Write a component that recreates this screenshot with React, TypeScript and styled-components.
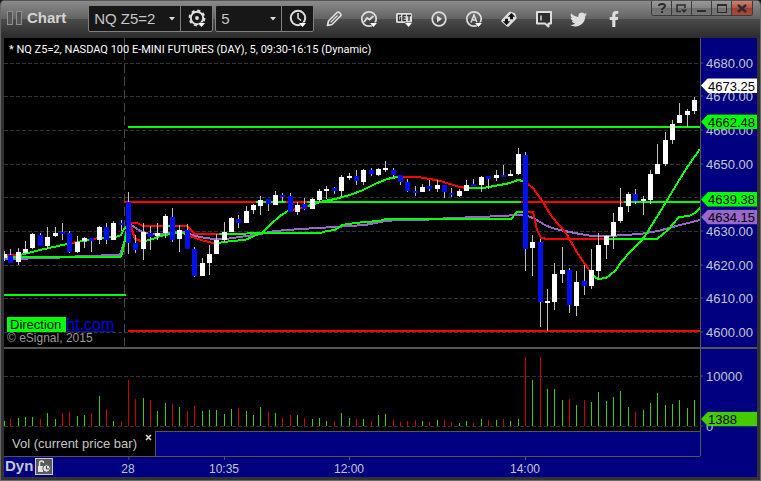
import React from "react";
import styled, { createGlobalStyle } from "styled-components";
import { FaTwitter, FaFacebookF } from "react-icons/fa";

const GlobalStyle = createGlobalStyle`
  *, *::before, *::after { box-sizing: border-box; }
  html, body { margin: 0; background: #1b1b1b; }
  body, button, select { font-family: "Liberation Sans", Arial, sans-serif; }
`;

const LINE = "#555555";
const NAVY = "#000080";
const LABEL = "#c3c7cf";

/* ---------- data ---------- */

/* w/b = up/down body, then high, body top, body bottom, low */
type Bar = ["w" | "b", number, number, number, number];

const bars: Bar[] = [
  ["w", 251, 254, 258, 261], ["b", 249, 255, 263, 263], ["w", 248, 252, 262, 265],
  ["w", 241, 249, 253, 253], ["w", 233, 234, 248, 249], ["b", 233, 235, 246, 246],
  ["w", 227, 237, 246, 249], ["w", 227, 233, 236, 237], ["b", 223, 232, 234, 240],
  ["b", 231, 233, 252, 253], ["w", 236, 242, 252, 253], ["w", 237, 238, 241, 248],
  ["b", 238, 238, 241, 252], ["w", 226, 227, 240, 244], ["b", 223, 227, 240, 244],
  ["w", 221, 223, 240, 240], ["b", 220, 223, 225, 231], ["b", 192, 202, 243, 254],
  ["b", 235, 243, 250, 253], ["w", 223, 232, 249, 260], ["b", 226, 233, 237, 250],
  ["w", 223, 233, 236, 240], ["w", 214, 216, 233, 238], ["b", 208, 217, 240, 242],
  ["w", 225, 230, 239, 252], ["b", 224, 230, 249, 249], ["b", 247, 249, 276, 277],
  ["w", 258, 263, 276, 276], ["w", 245, 254, 263, 275], ["w", 234, 240, 254, 254],
  ["w", 222, 232, 240, 242], ["w", 217, 218, 232, 232], ["b", 215, 219, 223, 228],
  ["w", 206, 211, 223, 223], ["w", 204, 205, 210, 214], ["w", 196, 200, 206, 215],
  ["b", 199, 199, 204, 211], ["w", 191, 195, 205, 205], ["b", 193, 195, 197, 202],
  ["b", 193, 196, 212, 212], ["w", 202, 205, 212, 215], ["b", 198, 204, 209, 210],
  ["w", 198, 199, 209, 209], ["w", 189, 191, 200, 202], ["w", 186, 189, 191, 199],
  ["b", 187, 188, 191, 194], ["w", 175, 177, 191, 196], ["w", 173, 176, 178, 180],
  ["b", 170, 176, 181, 185], ["w", 169, 170, 182, 185], ["b", 168, 170, 174, 176],
  ["w", 168, 169, 175, 176], ["w", 161, 168, 170, 172], ["b", 168, 170, 175, 178],
  ["b", 175, 175, 182, 185], ["b", 179, 182, 191, 192], ["b", 186, 191, 193, 196],
  ["w", 184, 187, 192, 192], ["b", 180, 186, 189, 191], ["w", 180, 185, 189, 192],
  ["b", 185, 185, 192, 198], ["b", 188, 193, 195, 197], ["w", 189, 191, 196, 197],
  ["w", 180, 185, 191, 191], ["b", 179, 184, 186, 186], ["w", 176, 177, 185, 192],
  ["b", 176, 176, 179, 189], ["w", 170, 175, 178, 181], ["b", 165, 175, 177, 177],
  ["w", 170, 174, 176, 176], ["w", 148, 154, 174, 175], ["b", 152, 155, 249, 271],
  ["w", 235, 242, 248, 276], ["b", 239, 242, 302, 327], ["w", 289, 301, 303, 331],
  ["w", 263, 274, 302, 310], ["w", 247, 270, 274, 283], ["b", 268, 270, 305, 313],
  ["w", 271, 282, 306, 316], ["b", 265, 281, 286, 295], ["w", 249, 270, 286, 289],
  ["w", 233, 245, 271, 280], ["w", 235, 236, 245, 259], ["w", 213, 222, 236, 249],
  ["w", 188, 207, 221, 223], ["w", 192, 194, 206, 212], ["b", 189, 194, 201, 204],
  ["w", 196, 199, 201, 215], ["w", 170, 174, 200, 204], ["w", 144, 164, 174, 174],
  ["w", 132, 140, 164, 166], ["w", 120, 124, 140, 144], ["w", 103, 115, 123, 123],
  ["w", 109, 111, 115, 127], ["w", 97, 100, 111, 114],
];

/* g/r = up/down volume followed by the column height */
const volumes =
  "g5 r7 g8 g9 g9 r7 g13 g7 r13 r14 g10 g11 r13 g30 r17 g5 r5 r46 r27 g28 r26 g15 g23 r22 g19 r15 r20 g15 g16 g16 g12 g17 r18 g15 g11 g19 r14 g13 r8 r11 g11 r8 g7 g8 g5 r5 g13 g8 r7 g7 r5 g11 g12 r6 r4 r5 r6 g5 r4 g6 r6 r4 g3 g5 r3 g7 r6 g6 r7 g5 g7 r69 g46 r69 g37 g37 g26 r27 g21 r26 g24 g34 g25 g29 g35 g19 r14 g16 g23 g33 g21 g22 g26 g18 g26".split(" ");

const GREEN = "#00ff00";
const RED = "#ff0000";
const PURPLE = "#9966cc";

const studies: Array<[string, string]> = [
  [PURPLE, "4,259 53,258 82,256 120,255 125,240 128,223 133,226 140,231 150,234 160,234 175,232 185,232 192,235 200,237 213,239 225,239 240,237 260,234 275,231 300,229 335,227 365,225 385,221 400,220 422,220 450,218 480,217 500,216 518,215 528,216 535,219 545,225 552,228 560,230 580,234 592,236 610,236 625,235 640,234 658,231 680,225 700,220"],
  [GREEN, "4,295 126,295"],
  [GREEN, "128,127 700,127"],
  [RED, "128,331 700,331"],
  [RED, "124,202 256,202"],
  [GREEN, "256,202 286,202"],
  [RED, "286,202 307,202"],
  [GREEN, "307,202 521,202"],
  [RED, "521,202 624,202"],
  [GREEN, "624,202 700,202"],
  [RED, "4,255 18,255"],
  [GREEN, "4,257 120,257 122,254 126,234 128,226"],
  [RED, "130,223 137,223 143,226 167,226"],
  [GREEN, "167,226 174,226"],
  [RED, "174,226 187,226 195,234 219,234"],
  [GREEN, "219,234 275,233 320,233 327,231 335,230 342,225 355,223 365,222 380,221 385,219 511,219 517,212 523,212"],
  [RED, "523,212 533,212 537,230 541,238 548,239 608,239"],
  [GREEN, "608,239 657,239 668,230 679,217 689,216 695,213 700,208"],
  [GREEN, "20,255 40,250 67,244"],
  [RED, "67,244 77,242"],
  [GREEN, "77,242 90,240"],
  [RED, "90,240 98,238"],
  [GREEN, "98,238 116,237 121,235 124,229 128,225"],
  [RED, "130,224 135,239 141,241 145,241"],
  [GREEN, "145,241 153,239 160,236 170,234 180,233 188,234"],
  [RED, "188,235 195,238 205,241 213,243 217,243"],
  [GREEN, "217,243 232,241 245,240 254,236 262,233 270,225 280,216 288,211 292,210"],
  [RED, "292,210 308,206"],
  [GREEN, "308,206 320,202 335,199 350,195 363,190 375,184 387,179 397,177 402,177"],
  [RED, "402,177 418,177 430,179 440,181 450,184 460,187 467,188"],
  [GREEN, "467,188 483,188 500,185 510,183 518,180 523,181"],
  [RED, "523,181 528,184 533,188 541,199 552,217 566,233 578,254 592,274"],
  [GREEN, "592,275 598,279 606,278 615,271 622,261 631,251 640,242 645,236 660,212 678,182 688,166 700,149"],
];

const barX = (i: number) => Math.max(4, Math.round(128 + 7.35 * (i - 17)));

const PLOT = { left: 4, width: 696, top: 38, height: 309 };
const priceY = (p: number) => 332 - (p - 4600) * 3.365;
const pricePct = (p: number) => `${((priceY(p) - PLOT.top) / PLOT.height) * 100}%`;
const volumeY = (v: number) => 426 - v * 0.005;
const volumePct = (v: number) => `${((volumeY(v) - 349) / 82) * 100}%`;
const timePct = (i: number) => `${((barX(i) - PLOT.left) / PLOT.width) * 100}%`;

const priceLevels = [4680, 4670, 4660, 4650, 4640, 4630, 4620, 4610, 4600];
const priceFlags = [
  { price: 4634.15, bg: PURPLE },
  { price: 4639.38, bg: GREEN },
  { price: 4662.48, bg: GREEN },
  { price: 4673.25, bg: "#ffffff" },
];
const times = [
  { bar: 17, text: "28" },
  { bar: 30, text: "10:35" },
  { bar: 47, text: "12:00" },
  { bar: 71, text: "14:00" },
];

/* ---------- window frame and title bar ---------- */

const Window = styled.div`
  display: flex;
  flex-direction: column;
  min-height: 100vh;
  border: 1px solid #666;
  border-top: 0;
  border-radius: 5px 5px 0 0;
  background: #333;
  overflow: hidden;
`;

const TitleBar = styled.header`
  display: flex;
  align-items: flex-start;
  height: 38px;
  padding: 0 7px 0 6px;
  border-top: 1px solid #555;
  background: linear-gradient(#8b8b8b 0, #626262 18px, #4b4b4b 18px, #2c2c2c 37px);
`;

const Grip = styled.span`
  display: flex;
  gap: 3px;
  margin: 10px 5px 0 0;
  &::before, &::after {
    content: "";
    width: 6px;
    height: 14px;
    border: 1px solid #8f8f8f;
    background: #555;
  }
`;

const AppName = styled.h1`
  margin: 8px 22px 0 0;
  font-size: 15px;
  line-height: 18px;
  font-weight: bold;
  color: #d4d4d4;
`;

const Combo = styled.div`
  display: flex;
  height: 27px;
  margin: 4px 2px 0 0;
  border: 1px solid #808080;
  border-radius: 2px;
  background: #171717;
`;

const SelectWrap = styled.label<{ $width: number }>`
  position: relative;
  width: ${(p) => p.$width}px;
  border-right: 1px solid #808080;
`;

const Select = styled.select`
  appearance: none;
  width: 100%;
  height: 25px;
  padding: 0 0 0 5px;
  border: 0;
  background: transparent;
  color: #c6c6c6;
  font-size: 15px;
  line-height: 25px;
`;

const Caret = styled.svg`
  position: absolute;
  right: 5px;
  top: 11px;
  pointer-events: none;
`;

const ComboButton = styled.button`
  display: grid;
  place-items: center;
  width: 31px;
  padding: 0;
  border: 0;
  background: transparent;
`;

const Tools = styled.nav`
  display: flex;
  flex: 1;
  margin-top: 7px;
`;

const ToolButton = styled.button`
  display: grid;
  place-items: center;
  width: 35px;
  height: 22px;
  padding: 0;
  border: 0;
  background: transparent;
  color: #dedede;
`;

const WindowButtons = styled.div`
  display: flex;
  border: 1px solid #3a3a3a;
  border-top: 0;
  border-radius: 0 0 3px 3px;
  overflow: hidden;
`;

const WindowButton = styled.button<{ $close?: boolean }>`
  display: grid;
  place-items: center;
  width: 20px;
  height: 14px;
  padding: 0;
  border: 0;
  border-right: ${(p) => (p.$close ? "0" : "1px solid #3a3a3a")};
  background: ${(p) =>
    p.$close
      ? "linear-gradient(#c98476, #b55340 50%, #9c4030 50%, #a84a38)"
      : "linear-gradient(#9a9a9a, #858585 50%, #6f6f6f 50%, #767676)"};
  color: #2b2b2b;
`;

/* ---------- chart body ---------- */

const ChartGrid = styled.main`
  flex: 1;
  display: grid;
  grid-template-columns: minmax(0, 1fr) 57px;
  grid-template-rows: minmax(309px, 1fr) 2px 82px 25px 21px;
  margin: 0 3px 3px;
  background: ${NAVY};
`;

const Pane = styled.section`
  position: relative;
  min-height: 0;
  background: #000;
`;

const Plot = styled.svg`
  position: absolute;
  inset: 0;
  display: block;
  width: 100%;
  height: 100%;
`;

const PaneTitle = styled.h2`
  position: absolute;
  left: 5px;
  top: 5px;
  margin: 0;
  font-family: Roboto, "Liberation Sans", sans-serif;
  font-size: 11px;
  line-height: 13px;
  font-weight: normal;
  color: #fff;
  white-space: nowrap;
`;

const Credits = styled.div`
  position: absolute;
  left: 3px;
  bottom: 3px;
  color: #9a9a9a;
  font-size: 12px;
  line-height: 12px;
`;

const CreditRow = styled.div`
  display: flex;
  align-items: center;
`;

const DirectionTag = styled.span`
  padding: 0 5px 0 3px;
  background: ${GREEN};
  color: #000;
  font-size: 13px;
  line-height: 15px;
`;

const SiteLink = styled.a`
  color: #0000e0;
  font-size: 16px;
  line-height: 15px;
`;

const Divider = styled.div`
  grid-column: 1 / -1;
  background: ${LINE};
`;

const Scale = styled.div`
  position: relative;
  border-left: 1px solid ${LINE};
  color: ${LABEL};
  font-size: 13px;
  line-height: 15px;
`;

const ScaleLabel = styled.span`
  position: absolute;
  left: 5px;
  transform: translateY(-50%);
  &::before {
    content: "";
    position: absolute;
    left: -5px;
    top: 7px;
    width: 2px;
    height: 1px;
    background: ${LINE};
  }
`;

const Flag = styled.output<{ $bg: string }>`
  position: absolute;
  left: 0;
  right: 0;
  height: 15px;
  padding-left: 7px;
  transform: translateY(-50%);
  background: ${(p) => p.$bg};
  color: #000;
  clip-path: polygon(0 50%, 7px 0, 100% 0, 100% 100%, 7px 100%);
`;

const LegendRow = styled.div`
  display: flex;
`;

const LegendTab = styled.div`
  display: flex;
  align-items: flex-start;
  gap: 8px;
  padding: 5px 3px 0 8px;
  background: #000;
  color: #c6c6c6;
  font-size: 13px;
  line-height: 16px;
  white-space: nowrap;
`;

const CloseTab = styled.button`
  display: grid;
  place-items: center;
  width: 7px;
  height: 7px;
  margin-top: -2px;
  padding: 0;
  border: 0;
  background: transparent;
`;

const LegendSpace = styled.div`
  flex: 1;
  border-top: 1px solid ${LINE};
  border-left: 1px solid ${LINE};
`;

const LegendEdge = styled.div`
  border-left: 1px solid ${LINE};
`;

const TimeRow = styled.div`
  position: relative;
  display: flex;
  align-items: flex-start;
  border-top: 1px solid ${LINE};
  color: ${LABEL};
`;

const Mode = styled.strong`
  padding-left: 1px;
  font-size: 15px;
  line-height: 18px;
`;

const LockButton = styled.button`
  display: grid;
  place-items: center;
  width: 18px;
  height: 17px;
  margin: 1px 0 0 2px;
  padding: 0;
  border: 1px solid #ccc;
  background: #5a5a5a;
`;

const TimeLabel = styled.time`
  position: absolute;
  top: 5px;
  transform: translateX(-50%);
  font-size: 12px;
  line-height: 15px;
  &::before {
    content: "";
    position: absolute;
    left: 50%;
    top: -5px;
    width: 1px;
    height: 3px;
    background: ${LINE};
  }
`;

/* ---------- icons ---------- */

const INK = "#dedede";

function Icon({ children }: { children: React.ReactNode }) {
  return (
    <svg width="20" height="20" viewBox="0 0 20 20" fill="none" stroke={INK} strokeWidth="2" aria-hidden="true">
      {children}
    </svg>
  );
}

const MenuMark = () => <path d="M11 14h7l-3.500 4z" fill="#fff" stroke="#2a2a2a" strokeWidth="1" paintOrder="stroke" />;

const GearIcon = () => (
  <Icon>
    <circle cx="10" cy="9" r="6.200" strokeWidth="2" />
    <circle cx="10" cy="9" r="7.500" strokeWidth="1.800" strokeDasharray="3.200 2.690" />
    <circle cx="10" cy="9" r="1.900" fill={INK} stroke="none" />
    <MenuMark />
  </Icon>
);
const ClockIcon = () => (
  <Icon>
    <circle cx="10" cy="9" r="7.200" />
    <path d="M10 4v5l3 2.500" strokeWidth="1.600" />
    <MenuMark />
  </Icon>
);
const PencilIcon = () => (
  <Icon>
    <path d="M3.500 16.500l1-4.500L13 3.500q1.500-1 3 .5t.5 3L8 15.500z" strokeWidth="1.700" strokeLinejoin="round" />
    <path d="M6.500 13.500l7-7" strokeWidth="1.200" />
    <path d="M3 17l.7-3 2.300 2.300z" fill={INK} stroke="none" />
  </Icon>
);
const WaveIcon = () => (
  <Icon>
    <circle cx="10" cy="10" r="7.200" strokeWidth="1.800" />
    <path d="M5 13l3-4 2.500 1.500L14.500 7" strokeWidth="1.900" />
    <MenuMark />
  </Icon>
);
const GetIcon = () => (
  <Icon>
    <rect x="2" y="4" width="16" height="10" rx="1.500" fill={INK} stroke="none" />
    <path d="M7 6.500H4.500v5h2V9H6M12 6.500H9v5h3M9 9h2.500M13 6.500h4M15 6v6" stroke="#333" strokeWidth="1.300" />
    <MenuMark />
  </Icon>
);
const PlayIcon = () => (
  <Icon>
    <circle cx="10" cy="10" r="6.800" strokeWidth="1.700" />
    <path d="M8 6.500l5 3.500-5 3.500z" fill={INK} stroke="none" />
  </Icon>
);
const AutoIcon = () => (
  <Icon>
    <circle cx="10" cy="10" r="7.200" strokeWidth="1.700" />
    <path d="M7 13.500l3-7.500 3 7.500M8 11h4" strokeWidth="1.500" />
    <MenuMark />
  </Icon>
);
const LinkIcon = () => (
  <Icon>
    <path d="M9.500 3.500q1-1 2-.7l4 1.200q.8.300 1 1.200l1 3.300q.2 1-.6 1.800L10 17.200q-1.200 1-2.300 0L2.800 13q-1.200-1.200 0-2.300z" fill={INK} stroke="none" />
    <path d="M12.500 4l3.700 3.700h-2.200v2.600h-3V7.700H8.800zM7.500 16l-3.700-3.700H6V9.700h3v2.600h2.200z" fill="#111" stroke="none" />
  </Icon>
);
const NoteIcon = () => (
  <Icon>
    <path d="M3 3h14v11.500h-2.500V17.500L11 14.500H3z" stroke={INK} strokeWidth="2" fill="#2e2e2e" strokeLinejoin="round" />
    <path d="M7 6.500v5" stroke="#fff" strokeWidth="1.200" />
  </Icon>
);

function SelectCaret() {
  return (
    <Caret width="6" height="4" viewBox="0 0 6 4" aria-hidden="true">
      <path d="M0 0h6L3 3.500z" fill="#ddd" />
    </Caret>
  );
}

const tools = [
  ["Draw", <PencilIcon />],
  ["Studies", <WaveIcon />],
  ["GET studies", <GetIcon />],
  ["Play", <PlayIcon />],
  ["Automation", <AutoIcon />],
  ["Link", <LinkIcon />],
  ["Note", <NoteIcon />],
  ["Twitter", <FaTwitter size={17} />],
  ["Facebook", <FaFacebookF size={16} />],
] as Array<[string, React.ReactElement]>;

/* ---------- plots ---------- */

function PricePlot() {
  return (
    <Plot viewBox="4 38 696 309" preserveAspectRatio="none" shapeRendering="crispEdges" role="img" aria-label="Price chart">
      <g stroke="#333333" strokeWidth="1" strokeDasharray="4 2">
        {priceLevels.map((p) => (
          <line key={p} x1="4" x2="700" y1={Math.round(priceY(p)) + 0.5} y2={Math.round(priceY(p)) + 0.5} />
        ))}
        <line x1="124.500" x2="124.500" y1="38" y2="347" stroke="#4a4a4a" strokeDasharray="9 4" />
      </g>
      <g fill="none" strokeWidth="2" strokeLinejoin="round">
        {studies.map(([color, points], i) => (
          <polyline key={i} points={points} stroke={color} />
        ))}
      </g>
      {bars.map(([kind, high, top, bottom, low], i) => (
        <g key={i}>
          <rect x={barX(i)} y={high} width="1" height={low - high} fill="#c0c0c0" />
          <rect x={barX(i) - 2} y={top} width="5" height={bottom - top} fill={kind === "w" ? "#ffffff" : "#0010f0"} />
        </g>
      ))}
    </Plot>
  );
}

function VolumePlot() {
  return (
    <Plot viewBox="4 349 696 82" preserveAspectRatio="none" shapeRendering="crispEdges" role="img" aria-label="Volume chart">
      <g stroke="#333333" strokeWidth="1" strokeDasharray="4 2">
        <line x1="4" x2="700" y1="376.500" y2="376.500" />
        <line x1="4" x2="700" y1="426.500" y2="426.500" />
      </g>
      {volumes.map((v, i) => {
        const h = Number(v.slice(1));
        return <rect key={i} x={barX(i)} y={426 - h} width="1" height={h} fill={v[0] === "g" ? "#44cc00" : "#cc0000"} />;
      })}
    </Plot>
  );
}

export default function App() {
  return (
    <>
      <GlobalStyle />
      <Window>
        <TitleBar>
          <Grip />
          <AppName>Chart</AppName>
          <Combo>
            <SelectWrap $width={92}>
              <Select aria-label="Symbol" defaultValue="NQ Z5=2">
                <option>NQ Z5=2</option>
              </Select>
              <SelectCaret />
            </SelectWrap>
            <ComboButton aria-label="Symbol settings"><GearIcon /></ComboButton>
          </Combo>
          <Combo>
            <SelectWrap $width={66}>
              <Select aria-label="Interval" defaultValue="5">
                <option>5</option>
              </Select>
              <SelectCaret />
            </SelectWrap>
            <ComboButton aria-label="Time template"><ClockIcon /></ComboButton>
          </Combo>
          <Tools aria-label="Chart tools">
            {tools.map(([name, icon]) => (
              <ToolButton key={name} aria-label={name}>{icon}</ToolButton>
            ))}
          </Tools>
          <WindowButtons>
            <WindowButton aria-label="Help">
              <svg width="8" height="10" viewBox="0 0 8 10" fill="none" stroke="currentColor" strokeWidth="2">
                <path d="M1 3q0-2 3-2t3 2q0 1-1.500 2T4 7M4 8v2" />
              </svg>
            </WindowButton>
            <WindowButton aria-label="Window menu">
              <svg width="11" height="9" viewBox="0 0 11 9" fill="none" stroke="currentColor" strokeWidth="1.500">
                <path d="M5 7.500H1V1h8v3" />
                <path d="M5 5.500h6L8 9z" fill="currentColor" stroke="none" />
              </svg>
            </WindowButton>
            <WindowButton aria-label="Minimize">
              <svg width="10" height="9" viewBox="0 0 10 9"><path d="M0 6h9v2H0z" fill="currentColor" /></svg>
            </WindowButton>
            <WindowButton aria-label="Maximize">
              <svg width="10" height="9" viewBox="0 0 10 9"><path d="M0 0h10v9H0zM1 2v6h8V2z" fillRule="evenodd" fill="currentColor" /></svg>
            </WindowButton>
            <WindowButton aria-label="Close" $close>
              <svg width="10" height="9" viewBox="0 0 10 9" stroke="currentColor" strokeWidth="2.400"><path d="M1 1l8 7M9 1L1 8" /></svg>
            </WindowButton>
          </WindowButtons>
        </TitleBar>

        <ChartGrid>
          <Pane>
            <PricePlot />
            <PaneTitle>* NQ Z5=2, NASDAQ 100 E-MINI FUTURES (DAY), 5, 09:30-16:15 (Dynamic)</PaneTitle>
            <Credits>
              <CreditRow>
                <DirectionTag>Direction</DirectionTag>
                <SiteLink href="#site">ht.com</SiteLink>
              </CreditRow>
              © eSignal, 2015
            </Credits>
          </Pane>
          <Scale>
            {priceLevels.map((p) => (
              <ScaleLabel key={p} style={{ top: pricePct(p) }}>{p.toFixed(2)}</ScaleLabel>
            ))}
            {priceFlags.map((f) => (
              <Flag key={f.price} $bg={f.bg} style={{ top: pricePct(f.price) }}>{f.price.toFixed(2)}</Flag>
            ))}
          </Scale>

          <Divider />

          <Pane>
            <VolumePlot />
          </Pane>
          <Scale>
            {[10000, 0].map((v) => (
              <ScaleLabel key={v} style={{ top: volumePct(v) }}>{v}</ScaleLabel>
            ))}
            <Flag $bg="#44cc00" style={{ top: volumePct(1388) }}>1388</Flag>
          </Scale>

          <LegendRow>
            <LegendTab>
              Vol (current price bar)
              <CloseTab aria-label="Close study">
                <svg width="7" height="7" viewBox="0 0 7 7" stroke="#ddd" strokeWidth="1.500"><path d="M1 1l5 5M6 1L1 6" /></svg>
              </CloseTab>
            </LegendTab>
            <LegendSpace />
          </LegendRow>
          <LegendEdge />

          <TimeRow>
            <Mode>Dyn</Mode>
            <LockButton aria-label="Lock time axis">
              <svg width="14" height="13" viewBox="0 0 14 13" fill="none" stroke="#e4e4e4" strokeWidth="1.500">
                <path d="M2.500 6V3q0-2 2-2t2 2" />
                <path d="M1 6h5v6H1z" fill="#e4e4e4" stroke="none" />
                <circle cx="9.500" cy="8.500" r="3.700" fill="#e4e4e4" stroke="#5a5a5a" strokeWidth="1" />
                <path d="M9.500 6v3H12" stroke="#444" strokeWidth="1" />
              </svg>
            </LockButton>
            {times.map((t) => (
              <TimeLabel key={t.text} style={{ left: timePct(t.bar) }}>{t.text}</TimeLabel>
            ))}
          </TimeRow>
        </ChartGrid>
      </Window>
    </>
  );
}
